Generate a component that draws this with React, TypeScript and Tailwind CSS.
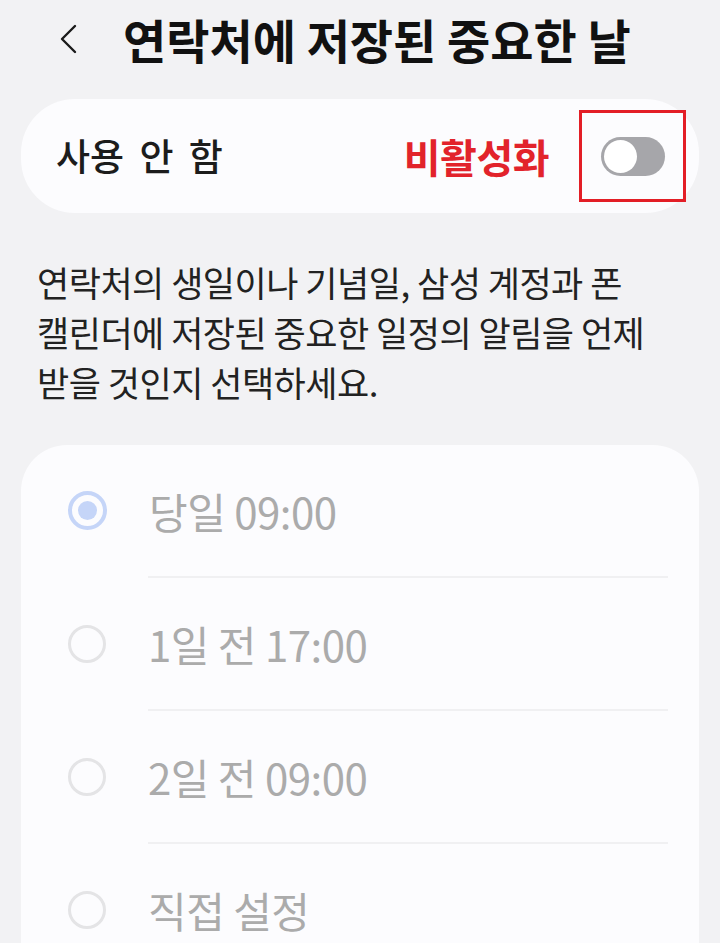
const FONT = "font-['Noto_Sans_CJK_KR','Noto_Sans',sans-serif]";

const options = [
  { label: "당일 09:00", selected: true },
  { label: "1일 전 17:00", selected: false },
  { label: "2일 전 09:00", selected: false },
  { label: "직접 설정", selected: false },
];

function BackIcon() {
  return (
    <svg width="22" height="30" viewBox="0 0 22 30" fill="none">
      <path d="M18 2 L5 15 L18 28" stroke="#1a1a1a" strokeWidth="2.4" strokeLinecap="round" strokeLinejoin="round" />
    </svg>
  );
}

function Toggle() {
  return (
    <div className="relative h-[39px] w-[64px] rounded-full bg-[#a6a6aa]">
      <div className="absolute left-[3px] top-[3px] h-[33px] w-[33px] rounded-full bg-white" />
    </div>
  );
}

function Radio({ selected }: { selected: boolean }) {
  if (selected) {
    return (
      <div className="flex h-[39px] w-[39px] items-center justify-center rounded-full border-[4px] border-[#c5d5f8]">
        <div className="h-[19px] w-[19px] rounded-full bg-[#c5d5f8]" />
      </div>
    );
  }
  return <div className="h-[38px] w-[38px] rounded-full border-[3px] border-[#e4e4e6]" />;
}

export default function App() {
  return (
    <div className={`h-[943px] w-[720px] overflow-hidden bg-[#f2f2f4] ${FONT}`}>
      <header className="flex h-[78px] items-center pl-[57px]">
        <BackIcon />
        <h1 className="ml-[44px] whitespace-nowrap text-[47px] font-bold tracking-[0px] text-[#111]">연락처에 저장된 중요한 날</h1>
      </header>

      <div className="mx-[21px] mt-[21px] flex h-[114px] items-center rounded-[54px] bg-[#fcfcfe] pl-[35px] pr-[13px]">
        <span className="flex-1 text-[37px] font-medium text-[#1c1c1c] [word-spacing:7px]">사용 안 함</span>
        <span className="text-[40px] font-bold tracking-[-0.5px] text-[#e2232b]">비활성화</span>
        <div className="ml-[30px] flex h-[92px] w-[107px] items-center justify-center border-[3.5px] border-[#e31e26]">
          <Toggle />
        </div>
      </div>

      <p className="mt-[44px] whitespace-nowrap px-[37px] text-[35px] leading-[50px] tracking-[-0.5px] text-[#222]">
        연락처의 생일이나 기념일, 삼성 계정과 폰<br />
        캘린더에 저장된 중요한 일정의 알림을 언제<br />
        받을 것인지 선택하세요.
      </p>

      <div className="mx-[21px] mt-[38px] rounded-t-[46px] bg-[#fcfcfe]">
        {options.map((opt, i) => (
          <div key={opt.label}>
            {i > 0 && <div className="ml-[127px] mr-[31px] h-[2px] bg-[#f0f0f2]" />}
            <div className="flex h-[131px] items-center pl-[47px]">
              <Radio selected={opt.selected} />
              <span className="ml-[42px] text-[42px] font-normal tracking-[-0.5px] text-[#ababab]">{opt.label}</span>
            </div>
          </div>
        ))}
      </div>
    </div>
  );
}
